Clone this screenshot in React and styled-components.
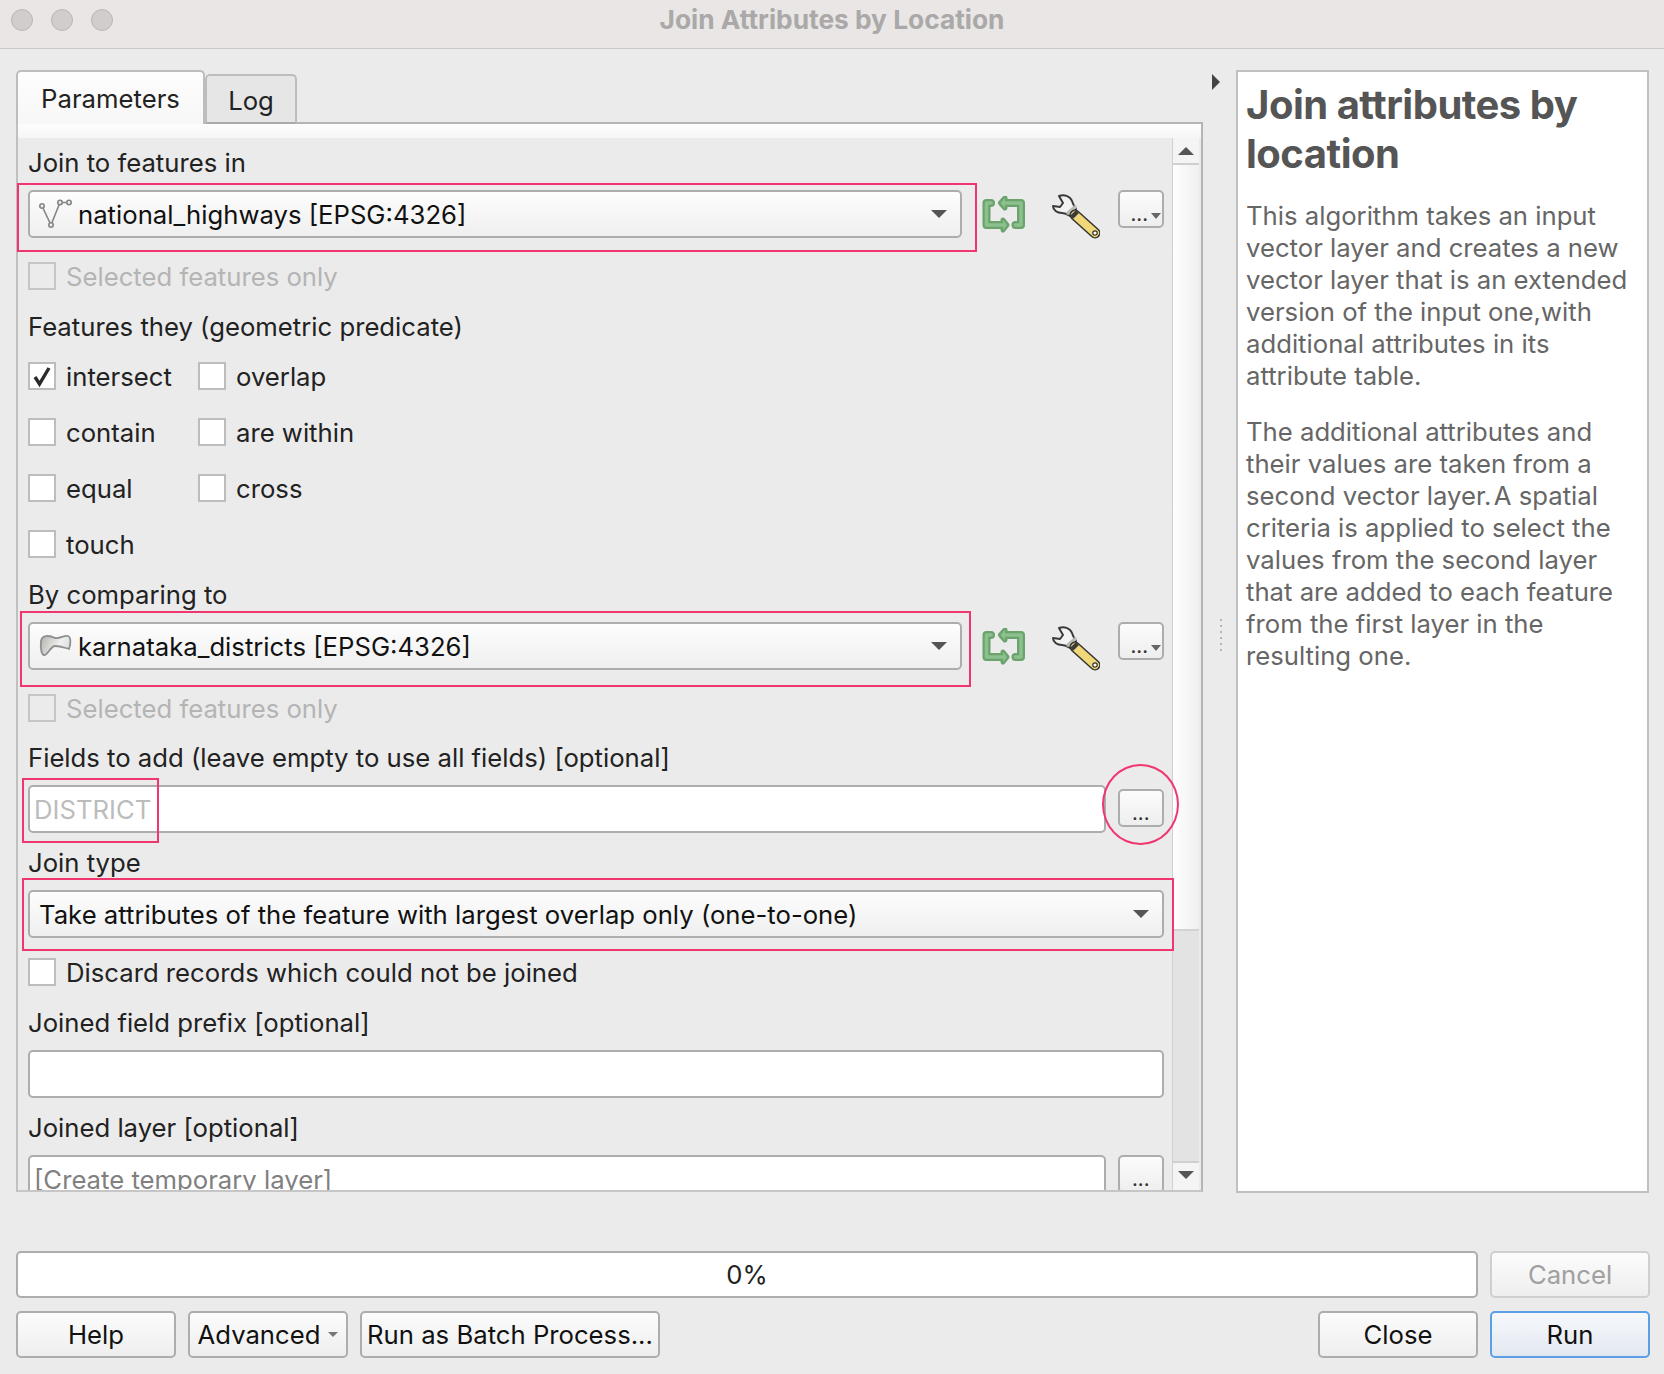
import React from "react";
import styled, { createGlobalStyle } from "styled-components";

const GlobalStyle = createGlobalStyle`
  html, body { margin: 0; padding: 0; background: #ebebeb; }
  * { box-sizing: border-box; }
`;

const Root = styled.div`
  position: relative;
  width: 1664px;
  height: 1374px;
  overflow: hidden;
  background: #ebebeb;
  font-family: Inter, "Liberation Sans", sans-serif;
  font-size: 25.7px;
  color: #222;
`;

const TitleBar = styled.div`
  position: relative;
  height: 49px;
  padding-bottom: 10px;
  background: #e9e6e5;
  border-bottom: 1px solid #c9c9c9;
  display: flex;
  align-items: center;
  justify-content: center;
  color: #aaa8a8;
  font-weight: 700;
  font-size: 26.3px;
`;

const Lights = styled.div`
  position: absolute;
  left: 11px;
  top: 9px;
  display: flex;
  gap: 18px;
`;

const Light = styled.span`
  width: 22px;
  height: 22px;
  border-radius: 50%;
  background: #d1cdcc;
  border: 1px solid #b9b6b5;
`;

const Main = styled.div`
  display: flex;
  padding: 21px 15px 0 16px;
`;

const TabColumn = styled.div`
  width: 1187px;
  display: flex;
  flex-direction: column;
`;

const TabBar = styled.div`
  display: flex;
  align-items: flex-end;
  height: 54px;
  position: relative;
  z-index: 1;
  margin-bottom: -2px;
`;

const Tab = styled.div`
  display: flex;
  align-items: center;
  justify-content: center;
  border: 2px solid #bdbdbd;
  border-radius: 5px 5px 0 0;
  height: ${(p) => (p.$active ? 54 : 50)}px;
  width: ${(p) => (p.$active ? 189 : 92)}px;
  background: ${(p) => (p.$active ? "linear-gradient(#fdfdfd, #f7f7f7)" : "#e6e6e6")};
  border-bottom: ${(p) => (p.$active ? "none" : "2px solid #aaa")};
  padding-top: ${(p) => (p.$active ? 1 : 2)}px;
`;

const Pane = styled.div`
  height: 1070px;
  border: 2px solid #b4b4b4;
  border-left-color: #c0c0c0;
  border-bottom: 2px solid #c6c6c6;
  display: flex;
  flex-direction: column;
`;

const PaneTop = styled.div`
  height: 14px;
  flex: none;
  background: linear-gradient(#fdfdfd, #f6f6f6);
`;

const PaneBody = styled.div`
  flex: 1;
  min-height: 0;
  display: flex;
`;

const Form = styled.div`
  flex: 1;
  min-width: 0;
  overflow: hidden;
  padding: 7px 8px 0 10px;
  display: flex;
  flex-direction: column;
`;

const Label = styled.div`
  height: 34px;
  flex: none;
  display: flex;
  align-items: center;
  white-space: nowrap;
  margin-top: ${(p) => p.$gap || 0}px;
  margin-bottom: 11px;
`;

const Row = styled.div`
  display: flex;
  flex: none;
  align-items: flex-start;
`;

const Combo = styled.div`
  width: ${(p) => (p.$wide ? "100%" : "934px")};
  height: 48px;
  flex: none;
  display: flex;
  align-items: center;
  gap: ${(p) => (p.$wide ? 0 : 9)}px;
  padding: 0 13px 0 9px;
  border: 2px solid #adadad;
  border-radius: 5px;
  background: linear-gradient(#fdfdfd, #efefef);
  color: #111;
  white-space: nowrap;
`;

const ComboText = styled.span`
  flex: 1;
`;

const Caret = styled.span`
  width: 0;
  height: 0;
  border-left: 8px solid transparent;
  border-right: 8px solid transparent;
  border-top: 8px solid #555;
`;

const LayerSvg = styled.svg`
  flex: none;
  overflow: visible;
`;

const ToolIcons = styled.div`
  display: flex;
  width: 136px;
  margin-left: 20px;
  padding-top: 4px;
  gap: 26px;
  flex: none;
`;

const RefreshSvg = styled.svg`
  margin-top: 2px;
  flex: none;
`;

const DotsButton = styled.div`
  width: 46px;
  height: 38px;
  flex: none;
  position: relative;
  margin-left: ${(p) => p.$left || 0}px;
  margin-top: ${(p) => p.$top || 0}px;
  border: 2px solid #adadad;
  border-radius: 5px;
  background: linear-gradient(#fcfcfc, #eeeeee);
  display: flex;
  align-items: flex-end;
  justify-content: center;
  padding-right: ${(p) => (p.$menu ? 3 : 0)}px;
  padding-bottom: 3px;
  font-size: 16px;
  font-weight: 700;
  line-height: 16px;
  letter-spacing: 0.5px;
  color: #333;
`;

const MiniCaret = styled.span`
  position: absolute;
  right: 1px;
  bottom: 7px;
  border-left: 5px solid transparent;
  border-right: 5px solid transparent;
  border-top: 6px solid #666;
`;

const CheckRow = styled.div`
  display: flex;
  flex: none;
  align-items: center;
  height: 28px;
  gap: 10px;
  margin-top: ${(p) => p.$gap || 0}px;
  color: ${(p) => (p.$disabled ? "#b4b4b4" : "#222")};
  white-space: nowrap;
`;

const Box = styled.span`
  width: 28px;
  height: 28px;
  flex: none;
  display: flex;
  align-items: center;
  justify-content: center;
  border: 2px solid ${(p) => (p.$disabled ? "#c6c6c6" : "#bdbdbd")};
  background: ${(p) => (p.$disabled ? "#ebebeb" : "#fff")};
`;

const Predicates = styled.div`
  display: grid;
  grid-template-columns: 170px auto;
  justify-content: start;
  row-gap: 28px;
  margin-top: 8px;
  flex: none;
`;

const TextInput = styled.div`
  width: ${(p) => (p.$full ? "100%" : "1078px")};
  height: 48px;
  flex: none;
  padding: 0 4px;
  display: flex;
  align-items: center;
  border: 2px solid #adadad;
  border-radius: 5px;
  background: #fff;
  color: ${(p) => p.$hint || "#222"};
  white-space: nowrap;
`;

const Scrollbar = styled.div`
  width: 27px;
  flex: none;
  display: flex;
  flex-direction: column;
  border-left: 1px solid #d0d0d0;
  margin-right: 2px;
`;

const ScrollArrow = styled.div`
  height: ${(p) => (p.$up ? 27 : 29)}px;
  flex: none;
  display: flex;
  align-items: center;
  justify-content: center;
  padding-bottom: ${(p) => (p.$up ? 0 : 3)}px;
  background: #f4f4f4;
  border-${(p) => (p.$up ? "bottom" : "top")}: 2px solid #cfcfcf;
`;

const ArrowGlyph = styled.span`
  border-left: 8px solid transparent;
  border-right: 8px solid transparent;
  border-${(p) => (p.$up ? "bottom" : "top")}: 8px solid #555;
`;

const ScrollTrack = styled.div`
  flex: 1;
  display: flex;
  flex-direction: column;
  background: linear-gradient(90deg, #fefefe, #f0f0f0);
`;

const ScrollThumb = styled.div`
  height: 232px;
  margin-top: auto;
  background: #e3e3e3;
  border-top: 2px solid #d3d3d3;
`;

const Splitter = styled.div`
  width: 33px;
  flex: none;
  position: relative;
`;

const SplitArrow = styled.span`
  position: absolute;
  left: 9px;
  top: 4px;
  border-top: 8px solid transparent;
  border-bottom: 8px solid transparent;
  border-left: 8px solid #444;
`;

const SplitDots = styled.span`
  position: absolute;
  left: 17px;
  top: 549px;
  width: 2px;
  height: 32px;
  background: repeating-linear-gradient(#b5b5b5 0 2px, transparent 2px 6px);
`;

const DocPanel = styled.div`
  width: 413px;
  height: 1123px;
  flex: none;
  border: 2px solid #c0c0c0;
  background: #fff;
  padding: 9px 8px 0 8px;
  color: #666;
`;

const DocTitle = styled.h1`
  margin: 0 0 22px;
  font-size: 40px;
  line-height: 48.5px;
  font-weight: 700;
  letter-spacing: -0.5px;
  color: #555;
`;

const DocText = styled.p`
  margin: 0 0 24px;
  font-size: 25.7px;
  line-height: 32px;
  white-space: nowrap;
`;

const Footer = styled.div`
  padding: 58px 14px 0 16px;
  display: flex;
  flex-direction: column;
  gap: 13px;
`;

const FooterRow = styled.div`
  display: flex;
  align-items: center;
  gap: 12px;
`;

const Progress = styled.div`
  width: 1462px;
  height: 47px;
  border: 2px solid #adadad;
  border-radius: 5px;
  background: #fff;
  display: flex;
  align-items: center;
  justify-content: center;
  color: #222;
`;

const Button = styled.div`
  height: 47px;
  width: ${(p) => p.$w}px;
  flex: none;
  display: flex;
  align-items: center;
  justify-content: center;
  gap: 8px;
  margin-left: ${(p) => (p.$push ? "auto" : "0")};
  border: 2px solid ${(p) => (p.$primary ? "#5d9fe6" : p.$disabled ? "#cfcfcf" : "#adadad")};
  border-radius: 5px;
  background: ${(p) => (p.$primary ? "linear-gradient(#f6f8fb, #e3e8f0)" : "linear-gradient(#fcfcfc, #eeeeee)")};
  color: ${(p) => (p.$disabled ? "#a0a0a0" : "#111")};
  white-space: nowrap;
`;

const SmallCaret = styled.span`
  border-left: 5px solid transparent;
  border-right: 5px solid transparent;
  border-top: 5px solid #777;
`;

const Annotation = styled.div`
  position: absolute;
  left: ${(p) => p.$x}px;
  top: ${(p) => p.$y}px;
  width: ${(p) => p.$w}px;
  height: ${(p) => p.$h}px;
  border: 2px solid #f0366f;
  border-radius: ${(p) => (p.$round ? "50%" : "0")};
  pointer-events: none;
`;

function LineLayerIcon() {
  return (
    <LayerSvg width="30" height="28" viewBox="0 0 30 28" fill="none" stroke="#858585" strokeWidth="1.6">
      <path d="M3 6 L12 25 L21 2.5 L30 2.5" />
      <circle cx="3" cy="6" r="2.2" fill="#eee" />
      <circle cx="12" cy="25" r="2.2" fill="#eee" />
      <circle cx="21" cy="2.5" r="2.2" fill="#eee" />
      <circle cx="30" cy="2.5" r="2.2" fill="#eee" />
    </LayerSvg>
  );
}

function PolygonLayerIcon() {
  return (
    <LayerSvg width="30" height="24" viewBox="0 0 30 24">
      <defs>
        <linearGradient id="blob" x1="0" y1="0" x2="1" y2="0.3">
          <stop offset="0" stopColor="#b3b3ab" />
          <stop offset="0.7" stopColor="#f0f0f0" />
          <stop offset="1" stopColor="#e0e0e0" />
        </linearGradient>
      </defs>
      <path
        d="M2 7 C3 1 10 1 16 4 C21 5 25 1 29 2 C32 3 32 10 30 15 C26 14 22 12 16 12 C12 12 9 20 6 21 C3 22 1 16 2 7 Z"
        fill="url(#blob)"
        stroke="#8f8f8f"
        strokeWidth="1.8"
      />
    </LayerSvg>
  );
}

function RefreshIcon() {
  const left = "M9 7 H4.5 V29 H21";
  const right = "M33.5 29 H39 V7 H23";
  const heads = "M21 24 L25 29 L21 34 Z M23 2 L18.5 7 L23 12 Z";
  return (
    <RefreshSvg width="44" height="38" viewBox="0 0 44 38" fill="none" strokeLinejoin="round" strokeLinecap="round">
      <path d={left} stroke="#6aa36c" strokeWidth="8" />
      <path d={right} stroke="#6aa36c" strokeWidth="8" />
      <path d={heads} stroke="#6aa36c" strokeWidth="5" fill="#6aa36c" />
      <path d={left} stroke="#8cc08d" strokeWidth="3.5" />
      <path d={right} stroke="#8cc08d" strokeWidth="3.5" />
      <path d={heads} fill="#8cc08d" />
    </RefreshSvg>
  );
}

function WrenchIcon() {
  return (
    <svg width="48" height="46" viewBox="0 0 48 46" fill="none" strokeLinecap="round">
      <path
        d="M7 2 C12 0 18 2 20 7 C21 10 22 12 24 15 L18 22 C15 20 13 19 10 19 C5 19 1 16 1 12 L8 13 L11 9 Z"
        fill="#f2f2f2"
        stroke="#3a3a3a"
        strokeWidth="2"
        strokeLinejoin="round"
      />
      <path d="M16 19 L23 13" stroke="#b9b9b9" strokeWidth="3.5" />
      <path d="M23 21 L43 39" stroke="#333" strokeWidth="11" />
      <path d="M23 21 L43 39" stroke="#f0d878" strokeWidth="8" />
      <path d="M21 19 L24 22" stroke="#3a3a3a" strokeWidth="8" strokeLinecap="butt" />
      <circle cx="43" cy="39" r="2.2" fill="#fff" stroke="#333" strokeWidth="1.2" />
    </svg>
  );
}

function CheckMark() {
  return (
    <svg width="24" height="24" viewBox="0 0 24 24" fill="none">
      <path d="M5 13 L9.5 20 L19 4" stroke="#2b2b2b" strokeWidth="3.4" />
    </svg>
  );
}

function Check({ label, checked, disabled, gap }) {
  return (
    <CheckRow $disabled={disabled} $gap={gap}>
      <Box $disabled={disabled}>{checked && <CheckMark />}</Box>
      {label}
    </CheckRow>
  );
}

function LayerRow({ icon, name }) {
  return (
    <Row>
      <Combo>
        {icon}
        <ComboText>{name}</ComboText>
        <Caret />
      </Combo>
      <ToolIcons>
        <RefreshIcon />
        <WrenchIcon />
      </ToolIcons>
      <DotsButton $menu>
        ...
        <MiniCaret />
      </DotsButton>
    </Row>
  );
}

const predicates = [
  ["intersect", true],
  ["overlap", false],
  ["contain", false],
  ["are within", false],
  ["equal", false],
  ["cross", false],
  ["touch", false],
];

export default function App() {
  return (
    <Root>
      <GlobalStyle />
      <TitleBar>
        <Lights>
          <Light />
          <Light />
          <Light />
        </Lights>
        Join Attributes by Location
      </TitleBar>
      <Main>
        <TabColumn>
          <TabBar>
            <Tab $active>Parameters</Tab>
            <Tab>Log</Tab>
          </TabBar>
          <Pane>
            <PaneTop />
            <PaneBody>
              <Form>
                <Label>Join to features in</Label>
                <LayerRow icon={<LineLayerIcon />} name="national_highways [EPSG:4326]" />
                <Check disabled gap={22} label="Selected features only" />
                <Label $gap={19}>Features they (geometric predicate)</Label>
                <Predicates>
                  {predicates.map(([label, checked]) => (
                    <Check key={label} label={label} checked={checked} />
                  ))}
                </Predicates>
                <Label $gap={19}>By comparing to</Label>
                <LayerRow icon={<PolygonLayerIcon />} name="karnataka_districts [EPSG:4326]" />
                <Check disabled gap={22} label="Selected features only" />
                <Label $gap={18}>Fields to add (leave empty to use all fields) [optional]</Label>
                <Row>
                  <TextInput $hint="#bcbcbc">DISTRICT</TextInput>
                  <DotsButton $left={12} $top={4}>...</DotsButton>
                </Row>
                <Label $gap={12}>Join type</Label>
                <Combo $wide>
                  <ComboText>Take attributes of the feature with largest overlap only (one-to-one)</ComboText>
                  <Caret />
                </Combo>
                <Check gap={20} label="Discard records which could not be joined" />
                <Label $gap={19}>Joined field prefix [optional]</Label>
                <TextInput $full />
                <Label $gap={12}>Joined layer [optional]</Label>
                <Row>
                  <TextInput $hint="#808080">[Create temporary layer]</TextInput>
                  <DotsButton $left={12}>...</DotsButton>
                </Row>
              </Form>
              <Scrollbar>
                <ScrollArrow $up>
                  <ArrowGlyph $up />
                </ScrollArrow>
                <ScrollTrack>
                  <ScrollThumb />
                </ScrollTrack>
                <ScrollArrow>
                  <ArrowGlyph />
                </ScrollArrow>
              </Scrollbar>
            </PaneBody>
          </Pane>
        </TabColumn>
        <Splitter>
          <SplitArrow />
          <SplitDots />
        </Splitter>
        <DocPanel>
          <DocTitle>
            Join attributes by
            <br />
            location
          </DocTitle>
          <DocText>
            This algorithm takes an input
            <br />
            vector layer and creates a new
            <br />
            vector layer that is an extended
            <br />
            version of the input one,with
            <br />
            additional attributes in its
            <br />
            attribute table.
          </DocText>
          <DocText>
            The additional attributes and
            <br />
            their values are taken from a
            <br />
            second vector layer.{"\u200a"}A spatial
            <br />
            criteria is applied to select the
            <br />
            values from the second layer
            <br />
            that are added to each feature
            <br />
            from the first layer in the
            <br />
            resulting one.
          </DocText>
        </DocPanel>
      </Main>
      <Footer>
        <FooterRow>
          <Progress>0%</Progress>
          <Button $w={160} $disabled>Cancel</Button>
        </FooterRow>
        <FooterRow>
          <Button $w={160}>Help</Button>
          <Button $w={160}>
            Advanced
            <SmallCaret />
          </Button>
          <Button $w={300}>Run as Batch Process...</Button>
          <Button $w={160} $push>Close</Button>
          <Button $w={160} $primary>Run</Button>
        </FooterRow>
      </Footer>
      <Annotation $x={17} $y={183} $w={960} $h={69} />
      <Annotation $x={20} $y={611} $w={951} $h={76} />
      <Annotation $x={22} $y={778} $w={137} $h={65} />
      <Annotation $x={22} $y={878} $w={1152} $h={73} />
      <Annotation $x={1102} $y={764} $w={77} $h={81} $round />
    </Root>
  );
}
